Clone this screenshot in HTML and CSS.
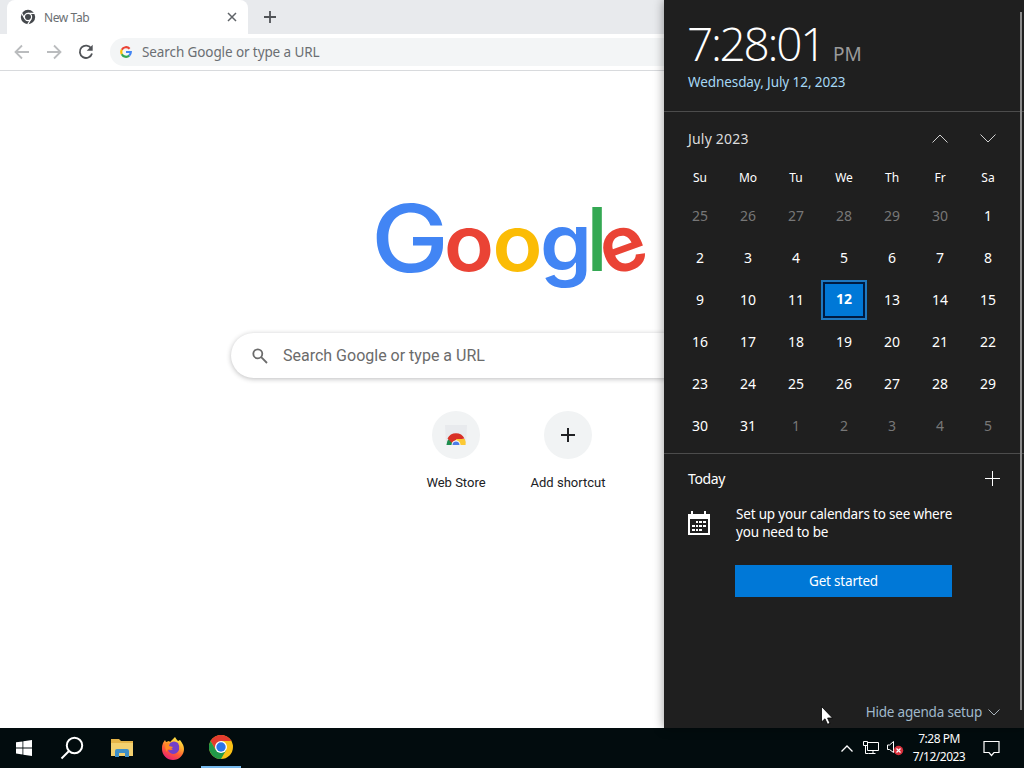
FILE: index.html
```
<!DOCTYPE html>
<html lang="en">

<head>
    <meta charset="UTF-8">
    <title>New Tab</title>
    <link rel="stylesheet" href="styles.css">
</head>

<body>
    <div class="browser">
        <div class="tabs">
            <div class="tab">
                <svg class="favicon" viewBox="0 0 16 16">
                    <circle cx="8" cy="8" r="7.2" fill="#45484c"/>
                    <g fill="none" stroke="#fff" stroke-width="1.2">
                        <circle cx="8" cy="8" r="3.6"/>
                        <path d="M8 4.400H15M11.100 9.800L7.600 15.600M4.900 9.800L1.400 3.700"/>
                    </g>
                </svg>
                <span class="tab-title">New Tab</span>
                <svg class="close" viewBox="0 0 10 10"><path d="M1 1l8 8M9 1l-8 8"/></svg>
            </div>
            <svg class="newtab" viewBox="0 0 12 12"><path d="M6 0v12M0 6h12"/></svg>
        </div>
        <div class="toolbar">
            <svg class="nav" viewBox="0 0 16 16"><path d="M15 8H2M8 1.500L1.500 8L8 14.500"/></svg>
            <svg class="nav" viewBox="0 0 16 16"><path d="M1 8h13M8 1.500L14.500 8L8 14.500"/></svg>
            <svg class="nav reload" viewBox="0 0 16 16"><path d="M13.300 4.500A6.200 6.200 0 1 0 14 9.500"/><path class="tip" d="M14.700 .8V6.800H8.700z"/></svg>
            <div class="omnibox">
                <svg class="g-icon" viewBox="0 0 12 12">
                    <g fill="none" stroke-width="2.200">
                        <path d="M1.800 3.800A4.800 4.800 0 0 1 9.600 2.800" stroke="#ea4335"/>
                        <path d="M1.800 8.200A4.800 4.800 0 0 1 1.800 3.800" stroke="#fbbc05"/>
                        <path d="M9.200 9.600A4.800 4.800 0 0 1 1.800 8.200" stroke="#34a853"/>
                        <path d="M6 6H10.800A4.800 4.800 0 0 1 9.200 9.600" stroke="#4285f4"/>
                    </g>
                </svg>
                <span>Search Google or type a URL</span>
            </div>
        </div>
        <div class="page">
            <svg class="logo" viewBox="0 0 280 110">
                <text class="cap" x="-1" y="76" textLength="78" lengthAdjust="spacingAndGlyphs" fill="#4285f4">G</text>
                <text x="72" y="75" textLength="50" lengthAdjust="spacingAndGlyphs" fill="#ea4335">o</text>
                <text x="120.500" y="75" textLength="50" lengthAdjust="spacingAndGlyphs" fill="#fbbc05">o</text>
                <text class="gee" x="168" y="75" textLength="52" lengthAdjust="spacingAndGlyphs" fill="#4285f4">g</text>
                <text class="ell" x="214" y="75" fill="#34a853">l</text>
                <text transform="translate(237 81.500) rotate(-20)" x="0" y="0" textLength="46" lengthAdjust="spacingAndGlyphs" fill="#ea4335">e</text>
            </svg>
            <div class="search">
                <svg viewBox="0 0 16 16"><circle cx="5.800" cy="5.800" r="4.500"/><path d="M9.200 9.200L15 15"/></svg>
                <span>Search Google or type a URL</span>
            </div>
            <div class="tiles">
                <div class="tile">
                    <div class="circle">
                        <svg width="24" height="24" viewBox="0 0 24 24">
                            <path d="M1 2h22l-1 20H2z" fill="#e8eaed"/>
                            <path d="M2.500 22a9.500 9.500 0 0 1 3-7l4 7z" fill="#1e8e4e"/>
                            <path d="M3.500 15.500a9.500 9.500 0 0 1 17 0l-8.500 1.500-4 3z" fill="#d93025"/>
                            <path d="M12 16h8.800a9.500 9.500 0 0 1 .7 6H14z" fill="#fcc934"/>
                            <path d="M7.500 22a4.500 4.500 0 0 1 9 0z" fill="#fff"/>
                            <path d="M8.500 22a3.500 3.500 0 0 1 7 0z" fill="#4b7be8"/>
                        </svg>
                    </div>
                    <span>Web Store</span>
                </div>
                <div class="tile">
                    <div class="circle">
                        <svg width="14" height="14" viewBox="0 0 14 14"><path d="M7 0v14M0 7h14" stroke="#202124" stroke-width="2"/></svg>
                    </div>
                    <span>Add shortcut</span>
                </div>
            </div>
        </div>
    </div>

    <div class="flyout">
        <div class="clock">
            <div class="time"><span class="digits">7:28:01</span><span class="ampm">PM</span></div>
            <div class="date">Wednesday, July 12, 2023</div>
        </div>
        <div class="calendar">
            <div class="month">
                <span>July 2023</span>
                <svg class="chev" viewBox="0 0 16 9"><path d="M.5 8.500L8 1l7.500 7.500"/></svg>
                <svg class="chev" viewBox="0 0 16 9"><path d="M.5 .5L8 8l7.500-7.500"/></svg>
            </div>
            <div class="grid week">
                <span>Su</span><span>Mo</span><span>Tu</span><span>We</span><span>Th</span><span>Fr</span><span>Sa</span>
            </div>
            <div class="grid days">
                <span class="off">25</span><span class="off">26</span><span class="off">27</span><span class="off">28</span><span class="off">29</span><span class="off">30</span><span>1</span>
                <span>2</span><span>3</span><span>4</span><span>5</span><span>6</span><span>7</span><span>8</span>
                <span>9</span><span>10</span><span>11</span><span class="today">12</span><span>13</span><span>14</span><span>15</span>
                <span>16</span><span>17</span><span>18</span><span>19</span><span>20</span><span>21</span><span>22</span>
                <span>23</span><span>24</span><span>25</span><span>26</span><span>27</span><span>28</span><span>29</span>
                <span>30</span><span>31</span><span class="off">1</span><span class="off">2</span><span class="off">3</span><span class="off">4</span><span class="off">5</span>
            </div>
        </div>
        <div class="agenda">
            <div class="agenda-head">
                <span>Today</span>
                <svg width="15" height="15" viewBox="0 0 15 15"><path d="M7.500 0v15M0 7.500h15" stroke="#fff"/></svg>
            </div>
            <div class="setup">
                <svg width="22" height="24" viewBox="0 0 22 24">
                    <path d="M0 3h3V0h2v3h11V0h2v3h4v21H0z" fill="#fff"/>
                    <path d="M2 8h18v14H2z" fill="#1f1f1f"/>
                    <path d="M8 10h2v2H8zM11 10h3v2h-3zM15 10h3v2h-3zM4 14h3v2H4zM8 14h2v2H8zM11 14h3v2h-3zM15 14h3v2h-3zM4 18h3v2H4zM8 18h2v2H8zM11 18h3v2h-3z" fill="#fff"/>
                </svg>
                <p>Set up your calendars to see where<br>you need to be</p>
            </div>
            <div class="start">Get started</div>
        </div>
        <div class="hide">
            <span>Hide agenda setup</span>
            <svg width="12" height="7" viewBox="0 0 12 7"><path d="M.5 .5L6 6l5.500-5.500" fill="none" stroke="#aab5bc"/></svg>
        </div>
        <div class="scroll"></div>
    </div>

    <svg class="cursor" viewBox="0 0 12 19"><path d="M.5 .5v15.500l3.500-3.200 2.500 5.500 2.500-1-2.400-5.300h4.900z" fill="#fff" stroke="#000" stroke-width=".8"/></svg>

    <div class="taskbar">
        <div class="app">
            <svg width="16" height="16" viewBox="0 0 16 16"><path d="M0 2.300l6.500-.9v6.100H0zM7.300 1.300L16 0v7.500H7.300zM0 8.400h6.500v6.100L0 13.600zM7.300 8.400H16V16l-8.700-1.300z" fill="#fff"/></svg>
        </div>
        <div class="app">
            <svg width="24" height="24" viewBox="0 0 24 24"><g fill="none" stroke="#fff" stroke-width="2"><circle cx="14.500" cy="9.500" r="7.700"/><path d="M9 15l-7.500 7.500"/></g></svg>
        </div>
        <div class="app folder">
            <svg width="22" height="18" viewBox="0 0 22 18">
                <path d="M0 0h8l2 2h12v15H0z" fill="#e5b448"/>
                <path d="M0 4h22v13H0z" fill="#f3d06f"/>
                <path d="M4 18v-6q0-2 2-2h10q2 0 2 2v6h-4v-4H8v4z" fill="#3f8fc7"/>
            </svg>
        </div>
        <div class="app">
            <svg width="24" height="24" viewBox="0 0 24 24">
                <defs>
                    <linearGradient id="fox" x1=".8" y1="0" x2=".3" y2="1">
                        <stop offset="0" stop-color="#fff44f"/>
                        <stop offset=".35" stop-color="#ffb02e"/>
                        <stop offset=".65" stop-color="#ff5a36"/>
                        <stop offset="1" stop-color="#e81e78"/>
                    </linearGradient>
                </defs>
                <path d="M2 7l2-3 1 2 3-1 1 1 5-5q1 2 3 4l2-1q4 5 4 9A11 11 0 0 1 1 13q0-4 1-6z" fill="url(#fox)"/>
                <path d="M9 7q4-3 8 0 2 3 1 7-2 4-6 4-4-1-5-4 3 1 5-1-2 0-4-2-2-1 1-4z" fill="#7440c8"/>
                <path d="M5 7l4 0-1 3 4 1q-1 2-4 2-2 0-2 3-3-4-1-9z" fill="#ff8a24"/>
            </svg>
        </div>
        <div class="app active">
            <svg width="24" height="24" viewBox="0 0 24 24">
                <circle cx="12" cy="12" r="12" fill="#fbc116"/>
                <path d="M12 12L6.800 15 1.600 6A12 12 0 0 1 22.400 6H12z" fill="#e33b2e"/>
                <path d="M1.600 6A12 12 0 0 0 12 24l5.200-9L12 12 6.800 15z" fill="#229a48"/>
                <circle cx="12" cy="12" r="6" fill="#fff"/>
                <circle cx="12" cy="12" r="4.700" fill="#2b74e8"/>
            </svg>
        </div>
        <div class="tray">
            <svg width="12" height="7" viewBox="0 0 12 7"><path d="M.5 6.500L6 1l5.500 5.500" fill="none" stroke="#fff" stroke-width="1.300"/></svg>
            <svg class="net" width="16" height="14" viewBox="0 0 16 14"><path d="M4.500 1.500h11v8H4.500zM10 9.500v3M5.500 12.500h7M.5 .5h4v4h-4zM2.500 4.500v8h3" fill="none" stroke="#fff"/></svg>
            <svg class="vol" width="17" height="16" viewBox="0 0 17 16">
                <path d="M.5 5h2L6.500 1.500v11L2.500 9.500h-2z" fill="none" stroke="#fff"/>
                <circle cx="11.500" cy="10.500" r="4.700" fill="#d8303c"/>
                <path d="M9.500 8.500l4 4M13.500 8.500l-4 4" stroke="#fff" stroke-width="1.200"/>
            </svg>
            <div class="now"><span>7:28 PM</span><span>7/12/2023</span></div>
            <svg class="note" width="17" height="17" viewBox="0 0 17 17"><path d="M1 1.500h15v11h-5l-2.500 3-2.500-3H1z" fill="none" stroke="#fff" stroke-width="1.200"/></svg>
        </div>
    </div>
</body>

</html>
```
FILE: styles.css
```
* {
    box-sizing: border-box;
}
body {
    margin: 0;
    width: 1024px;
    height: 768px;
    overflow: hidden;
    position: relative;
    background: #fff;
    font-family: "Noto Sans", "Open Sans", sans-serif;
}
svg {
    display: block;
    flex: none;
}
span {
    white-space: nowrap;
}

/* browser */
.browser {
    height: 728px;
}
.tabs {
    height: 34px;
    background: #e8eaed;
    display: flex;
    align-items: center;
}
.tab {
    width: 241px;
    height: 34px;
    margin-left: 7px;
    padding: 0 11px 0 13px;
    background: #fff;
    border-radius: 8px 8px 0 0;
    display: flex;
    align-items: center;
}
.favicon {
    width: 16px;
    height: 16px;
}
.tab-title {
    flex: 1;
    margin-left: 8px;
    font-size: 12px;
    letter-spacing: -.4px;
    color: #6b6f73;
}
.close {
    width: 10px;
    height: 10px;
    stroke: #5f6368;
    stroke-width: 1.5;
}
.newtab {
    width: 12px;
    height: 12px;
    margin-left: 16px;
    stroke: #505357;
    stroke-width: 1.8;
}
.toolbar {
    height: 37px;
    padding-left: 14px;
    border-bottom: 1px solid #d8dadd;
    display: flex;
    align-items: center;
}
.nav {
    width: 16px;
    height: 16px;
    margin-right: 16px;
    fill: none;
    stroke: #babcbe;
    stroke-width: 1.8;
}
.reload {
    stroke: #505357;
}
.reload .tip {
    fill: #505357;
    stroke: none;
}
.omnibox {
    flex: 1;
    height: 28px;
    padding-left: 10px;
    border-radius: 14px 0 0 14px;
    background: #f3f5f6;
    display: flex;
    align-items: center;
    font-size: 13.5px;
    letter-spacing: -.1px;
    color: #6b6f73;
}
.g-icon {
    width: 12px;
    height: 12px;
    margin-right: 10px;
}
.page {
    display: flex;
    flex-direction: column;
    align-items: center;
    font-family: Roboto, sans-serif;
}
.logo {
    width: 280px;
    height: 110px;
    margin-top: 125px;
    overflow: visible;
}
.logo text {
    font-family: Inter, sans-serif;
    font-weight: 600;
    font-size: 78px;
}
.logo .cap {
    font-weight: 500;
    font-size: 93px;
}
.logo .gee {
    font-size: 80px;
}
.logo .ell {
    font-weight: 500;
    font-size: 88px;
}
.search {
    width: 562px;
    height: 45px;
    margin-top: 27px;
    padding-left: 21px;
    border-radius: 23px;
    box-shadow: 0 1px 5px rgba(32, 33, 36, .3);
    display: flex;
    align-items: center;
    font-size: 16px;
    color: #6b6b6b;
}
.search svg {
    width: 16px;
    height: 16px;
    margin-right: 15px;
    fill: none;
    stroke: #6b6b6b;
    stroke-width: 1.8;
}
.tiles {
    margin-top: 33px;
    display: flex;
}
.tile {
    width: 112px;
    display: flex;
    flex-direction: column;
    align-items: center;
    font-size: 13px;
    color: #202124;
}
.circle {
    width: 48px;
    height: 48px;
    margin-bottom: 16px;
    border-radius: 50%;
    background: #f1f3f4;
    display: flex;
    align-items: center;
    justify-content: center;
}

/* clock and calendar flyout, over the browser */
.flyout {
    position: absolute;
    left: 664px;
    top: 0;
    width: 360px;
    height: 728px;
    background: #1f1f1f;
    box-shadow: 0 0 10px rgba(0, 0, 0, .4);
    color: #fff;
    font-size: 14px;
}
.clock {
    height: 112px;
    padding: 12px 0 0 23px;
    border-bottom: 1px solid #4c4c4c;
}
.time {
    height: 60px;
    display: flex;
    align-items: baseline;
    line-height: 62px;
}
.digits {
    width: 146px;
    font-family: "Open Sans", sans-serif;
    font-weight: 300;
    font-size: 46px;
    letter-spacing: -2.3px;
}
.ampm {
    font-size: 19px;
    color: #9a9a9a;
}
.date {
    margin-left: 1px;
    font-size: 13.5px;
    letter-spacing: -.08px;
    line-height: 21px;
    color: #a6d8f5;
}
.calendar {
    height: 342px;
    border-bottom: 1px solid #4c4c4c;
}
.month {
    height: 52px;
    padding: 0 28px 0 24px;
    display: flex;
    align-items: center;
    color: #dcdcdc;
    letter-spacing: .2px;
}
.month span {
    flex: 1;
}
.chev {
    width: 16px;
    height: 9px;
    margin-left: 32px;
    fill: none;
    stroke: #d0d0d0;
}
.grid {
    margin-left: 12px;
    width: 336px;
    display: grid;
    grid-template-columns: repeat(7, 48px);
    justify-items: center;
    align-items: center;
}
.week {
    height: 26px;
    font-size: 12px;
}
.days {
    margin-top: 4px;
    grid-auto-rows: 42px;
}
.days .off {
    color: #777;
}
.days .today {
    width: 46px;
    height: 40px;
    margin-top: 2px;
    line-height: 34px;
    text-align: center;
    border: 2px solid #1f78c0;
    outline: 2px solid #001a40;
    outline-offset: -4px;
    background: #0078d7;
    font-weight: bold;
}
.agenda {
    height: 244px;
    padding: 0 24px;
}
.agenda-head {
    height: 50px;
    padding-bottom: 1px;
    display: flex;
    align-items: center;
    justify-content: space-between;
    letter-spacing: -.4px;
}
.setup {
    margin-top: 1px;
    display: flex;
    align-items: center;
    gap: 26px;
}
.setup p {
    margin: 0;
    line-height: 18px;
    font-size: 13.5px;
    letter-spacing: -.18px;
    white-space: nowrap;
}
.start {
    width: 217px;
    height: 32px;
    margin: 24px 0 0 47px;
    background: #0078d7;
    line-height: 32px;
    text-align: center;
    font-size: 13.5px;
    letter-spacing: -.2px;
}
.hide {
    height: 28px;
    padding-right: 24px;
    display: flex;
    align-items: center;
    justify-content: flex-end;
    gap: 6px;
    font-size: 13.5px;
    letter-spacing: -.2px;
    color: #a0b9cb;
}
.scroll {
    position: absolute;
    left: 356px;
    top: 12px;
    width: 2px;
    height: 698px;
    background: #8a8a8a;
}
.cursor {
    position: absolute;
    left: 821px;
    top: 706px;
    width: 12px;
    height: 19px;
}

/* taskbar */
.taskbar {
    height: 40px;
    background: #020c0e;
    display: flex;
    color: #fff;
}
.app {
    width: 49px;
    display: flex;
    align-items: center;
    justify-content: center;
}
.app:first-child {
    width: 47px;
}
.folder {
    width: 52px;
}
.active {
    width: 40px;
    margin-left: 4px;
    border-bottom: 2px solid #76b9ed;
}
.tray {
    flex: 1;
    padding-right: 24px;
    display: flex;
    align-items: center;
    justify-content: flex-end;
}
.net {
    margin-left: 10px;
}
.vol {
    margin-left: 8px;
}
.now {
    width: 54px;
    margin: 0 17px 0 8px;
    display: flex;
    flex-direction: column;
    align-items: center;
    font-size: 12px;
    letter-spacing: -.5px;
    line-height: 18px;
}
```
